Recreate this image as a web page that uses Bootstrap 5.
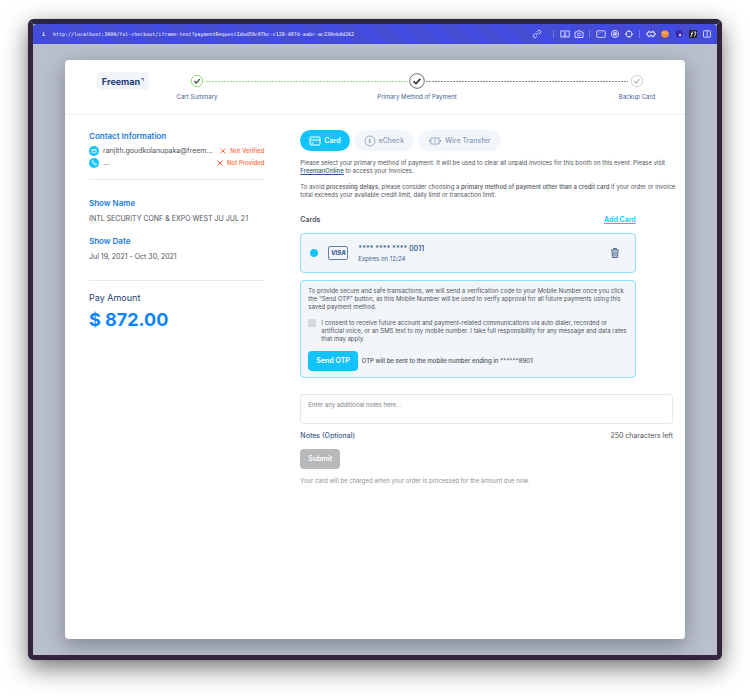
<!DOCTYPE html>
<html lang="en">
<head>
<meta charset="utf-8">
<meta name="viewport" content="width=device-width, initial-scale=1">
<title>Freeman Checkout</title>
<link href="https://cdn.jsdelivr.net/npm/bootstrap@5.3.0/dist/css/bootstrap.min.css" rel="stylesheet">
<style>
:root{--cyan:#12c4fb;--navy:#3f5f8f;--pale:#f2f6fb;--blue:#1b7ce0}
body{font-family:Inter,"Liberation Sans",sans-serif;font-size:6px;line-height:8px;color:#50545a;background:#fff}
button,input,textarea{font-family:inherit}
.page-pad{padding:19px 28px 37px}
.browser{border:5px solid #34253f;border-top-color:#292640;border-radius:6px;background:#bac0cb;box-shadow:0 0 1px #667,0 8px 24px rgba(0,0,0,.55)}
.toolbar{height:20px;padding:0 5px 0 9px;color:#fff;background:repeating-linear-gradient(45deg,#414bdf 0 12px,#454cd2 12px 24px);font:400 5px/10px "DejaVu Sans Mono",monospace}
.toolbar svg{width:10px;height:10px;flex:none;fill:none;stroke:#cfd1ff;stroke-width:1}
.dots{width:4px;height:8px;background:linear-gradient(90deg,transparent 1px,#7379ea 1px 2px,transparent 2px)}
.tool-gap{margin-right:6px}
.stage{padding:16px 32px}
.sheet{border-radius:4px;background:#fff;box-shadow:0 6px 20px rgba(40,45,60,.4)}
.sheet-head{padding:12px 8px 0 32px;height:55px;border-bottom:1px solid #eceef1}
.brand-box{width:52px;height:18px;border-radius:4px;background:var(--pale);color:#1c3a70;font-size:9px;line-height:19px;font-weight:700;margin-right:8px}
.brand-box svg{width:4px;height:4px;margin-bottom:5px}
.step{width:80px;flex:none;color:var(--navy)}
.step svg{width:18px;height:18px;display:block;margin:0 auto 3px;fill:none}
.joint{height:1px;margin:9px -31px 0;background:repeating-linear-gradient(90deg,#85878b 0 2px,transparent 2px 3px)}
.joint.done{background:repeating-linear-gradient(90deg,#9bd882 0 2px,transparent 2px 3px)}
.sheet-body{display:grid;grid-template-columns:32fr 68fr;gap:36px;padding:15px 12px 154px 24px}
.title{font-size:8px;line-height:12px;font-weight:600;color:var(--blue);margin:0}
.value{font-size:7px;line-height:12px}
.rule{height:1px;background:#e9eaec}
.dot-icon{width:10px;height:10px;flex:none}
.alert-text{color:#ff6a39;font-size:6px;font-weight:500}
.alert-text svg{width:6px;height:6px;stroke:#ff6a39}
.amount{font-size:18px;line-height:22px;font-weight:700;color:#0b84ff}
.pay{font-size:9px;line-height:14px;color:#1f3c70}
.pill{height:21px;border:0;border-radius:11px;padding:0 10px;gap:3px;background:var(--pale);color:#8b9db8;font-size:7px;line-height:12px;font-weight:500}
.pill.on{background:var(--cyan);color:#fff;font-weight:600;padding:0 9px}
.pill svg{height:12px;fill:none;stroke:currentColor;stroke-width:1}
.copy{margin-right:-4px}
.copy strong{font-weight:500}
.narrow{width:90%}
.box{border:1px solid #8fdefb;border-radius:4px;background:var(--pale)}
.pick{appearance:none;width:8px;height:8px;border-radius:4px;background:var(--cyan);margin:0}
.visa{width:20px;height:14px;border:1px solid #6680a8;border-radius:2px;color:var(--navy);font-size:6px;line-height:12px;font-weight:800;font-style:italic}
.tick{appearance:none;width:8px;height:8px;flex:none;background:#d7dade;border-radius:1px;margin:0}
.act{border:0;border-radius:4px;height:20px;padding:0 8px;color:#fff;background:var(--cyan);font-size:7px;line-height:12px;font-weight:600}
.act:disabled{background:#b6b8ba}
.notes{height:30px;border:1px solid #e5e7eb;border-radius:3px;padding:6px 7px;font-size:6px;line-height:8px;resize:none;display:block}
.notes::placeholder{color:#7d8188}
.s7{font-size:7px;line-height:12px}
.foot{color:#8d9197}
.g3{margin-top:3px}
.g6{margin-top:6px}
.g7{margin-top:7px}
.g10{margin-top:10px}
.g15{margin-top:15px}
.g17{margin-top:17px}
.online{color:#2c5590;font-weight:500}
.add{color:var(--cyan)}
.saved{height:40px;padding:0 15px 0 9px}
.saved-label{color:var(--navy);gap:10px;margin-left:10px}
.bin{border:0;background:none;padding:0;width:10px;height:12px;display:flex}
.bin svg{width:10px;height:12px;fill:none}
.consent{padding:6px 7px}
.agree{margin-left:5px;margin-right:-2px}
.notes-label{color:var(--navy);font-weight:500}
.otp-note{font-weight:500}
</style>
</head>
<body>
<div class="page-pad">
<div class="browser">
  <div class="toolbar d-flex align-items-center gap-1 rounded-top-1">
    <b class="me-1">i</b>
    <span class="me-auto text-nowrap">http://localhost:3000/fol-checkout/iframe-test?paymentRequestId=d59c07bc-c128-497d-aabc-ac230eb4d262</span>
    <svg class="tool-gap" viewBox="0 0 10 10"><path d="M4 6 6.500 3.500M4.500 3.200 6 1.700a1.600 1.600 0 0 1 2.300 2.300L6.500 5.800M5.500 6.800 4 8.300A1.600 1.600 0 0 1 1.700 6L3.500 4.200"/></svg>
    <span class="dots"></span>
    <svg viewBox="0 0 10 10"><rect x=".8" y="2" width="8.400" height="6"/><circle cx="5" cy="4.300" r=".8"/><path d="M3.500 7c.7-1.200 2.300-1.200 3 0z"/></svg>
    <svg viewBox="0 0 10 10"><path d="M1 3h2l.7-1.200h2.600L7 3h2v5.500H1z"/><circle cx="5" cy="5.500" r="1.500"/></svg>
    <span class="dots"></span>
    <svg viewBox="0 0 10 10"><rect x=".8" y="1.800" width="8.400" height="6.600" rx=".6"/><path d="m2.500 3.500 1 1M4.500 3.500h1" stroke-width=".7"/></svg>
    <svg viewBox="0 0 10 10"><circle cx="5" cy="5" r="3.600"/><circle cx="5" cy="5" r="1.300"/><path d="M5 1.400v7.200M1.400 5h7.200M2.500 2.500l5 5M7.500 2.500l-5 5" stroke-width=".5"/></svg>
    <svg viewBox="0 0 10 10"><circle cx="5" cy="5" r="3"/><path d="M5 .8v2.400M5 6.800v2.400M.8 5h2.400M6.800 5h2.400"/></svg>
    <span class="dots"></span>
    <svg viewBox="0 0 10 10"><path d="M3 2.300.6 5 3 7.700l2-1.500 2 1.500L9.400 5 7 2.300 5 3.800z" stroke-width="1.200"/></svg>
    <svg viewBox="0 0 10 10"><circle cx="5" cy="5" r="3.800" fill="#ed9140" stroke="none"/><path d="M2 3.500Q5 6 8 3" stroke="#ffc27c"/></svg>
    <svg viewBox="0 0 10 10"><circle cx="5" cy="4.700" r="3.500" fill="#3b26a6" stroke="none"/><circle cx="6" cy="6" r="1.200" fill="#d7cfff" stroke="none"/></svg>
    <svg viewBox="0 0 10 10"><rect x="1" y="1" width="8" height="8" rx="1" fill="#24262b" stroke="none"/><path d="M2.500 8c1 0 1-5.500 2.500-5.500M3 4.500h2M6 3h2L6.500 7.500" stroke="#fff" stroke-width=".8"/></svg>
    <svg viewBox="0 0 10 10"><rect x="1.500" y="1.800" width="7" height="6.400" rx=".6"/><path d="M5.200 2v6"/></svg>
  </div>
  <div class="stage">
  <main class="sheet">
    <header class="sheet-head d-flex align-items-start">
      <div class="brand-box text-center flex-shrink-0">Freeman<svg viewBox="0 0 4 4"><path d="M.3.300h3.200v3.200l-1-2.200z" fill="#1c3a70"/></svg></div>
      <div class="step text-center"><svg viewBox="0 0 18 18"><circle cx="9" cy="9" r="5.700" stroke="#8fd877"/><path d="m6.300 9.200 2 1.900 3.400-4" stroke="#44484f" stroke-width="1.400"/></svg>Cart Summary</div>
      <div class="joint done flex-grow-1"></div>
      <div class="step text-center"><svg viewBox="0 0 18 18"><circle cx="9" cy="9" r="7.300" stroke="#666a72"/><path d="m5.400 9.400 2.600 2.200 4.300-4.800" stroke="#333840" stroke-width="1.800"/></svg>Primary Method of Payment</div>
      <div class="joint flex-grow-1"></div>
      <div class="step text-center"><svg viewBox="0 0 18 18"><circle cx="9" cy="9" r="5.700" stroke="#cfd2d6"/><path d="m6.300 9.200 2 1.900 3.400-4" stroke="#b5b9c0" stroke-width="1.200"/></svg>Backup Card</div>
    </header>
    <div class="sheet-body">
      <aside>
        <h2 class="title">Contact Information</h2>
        <div class="d-flex align-items-center s7 g3">
          <svg class="dot-icon me-1" viewBox="0 0 10 10"><circle cx="5" cy="5" r="5" fill="#12c4fb"/><path d="M2.800 3.500h4.400v3.200H2.800zl2.200 1.700 2.200-1.700" fill="none" stroke="#fff" stroke-width=".7"/></svg>
          <span class="text-nowrap">ranjith.goudkolanupaka@freem...</span>
          <span class="alert-text ms-auto text-nowrap d-flex align-items-center gap-1"><svg viewBox="0 0 6 6"><path d="m.7.700 4.600 4.600M5.300.7.700 5.300"/></svg>Not Verified</span>
        </div>
        <div class="d-flex align-items-center s7">
          <svg class="dot-icon me-1" viewBox="0 0 10 10"><circle cx="5" cy="5" r="5" fill="#12c4fb"/><path d="M3.300 2.800c-1 1.500 2 4.700 3.900 4.100l.2-1-1.300-.6-.6.500-1-1.100.4-.6-.7-1.400z" fill="none" stroke="#fff" stroke-width=".7"/></svg>
          <span>...</span>
          <span class="alert-text ms-auto text-nowrap d-flex align-items-center gap-1"><svg viewBox="0 0 6 6"><path d="m.7.700 4.600 4.600M5.300.7.700 5.300"/></svg>Not Provided</span>
        </div>
        <div class="rule g10"></div>
        <h2 class="title g17">Show Name</h2>
        <div class="value mt-1">INTL SECURITY CONF &amp; EXPO WEST JU JUL 21</div>
        <h2 class="title g10">Show Date</h2>
        <div class="value mt-1">Jul 19, 2021 - Oct 30, 2021</div>
        <div class="rule g17"></div>
        <div class="pay g10">Pay Amount</div>
        <div class="amount mt-1">$ 872.00</div>
      </aside>
      <section>
        <div class="d-flex gap-1">
          <button type="button" class="pill on d-flex align-items-center"><svg viewBox="0 0 12 12" width="12"><rect x="1" y="2" width="10" height="8" rx="1"/><path d="M1 5h10M2.500 8h2"/></svg>Card</button>
          <button type="button" class="pill d-flex align-items-center"><svg viewBox="0 0 12 12" width="12"><circle cx="6" cy="6" r="5" stroke-width=".8"/><path d="M7 4.500H5.200v3H7M5.200 6h1.600" stroke-width=".8"/></svg>eCheck</button>
          <button type="button" class="pill d-flex align-items-center"><svg viewBox="0 0 14 12" width="14"><path d="M3 4.500V3h8v1.500M3 7.500V9h8V7.500M4 6H1m1.500-1.500L1 6l1.500 1.500M10 6h3m-1.500-1.500L13 6l-1.500 1.500M7 4.500v3" stroke-width=".9"/></svg>Wire Transfer</button>
        </div>
        <div class="copy mt-2">Please select your primary method of payment. It will be used to clear all unpaid invoices for this booth on this event. Please visit <a href="#" class="online">FreemanOnline</a> to access your invoices.</div>
        <div class="copy mt-2">To avoid <strong>processing delays</strong>, please consider choosing a <strong>primary method of payment other than a credit card</strong> if your order or invoice total exceeds your available credit limit, daily limit or transaction limit.</div>
        <div class="narrow">
          <div class="d-flex justify-content-between s7 g15 fw-semibold"><span>Cards</span><a href="#" class="add">Add Card</a></div>
          <div class="box g7 d-flex align-items-center saved">
            <input class="pick" type="radio" name="card" id="visa0011" checked>
            <label for="visa0011" class="d-flex align-items-center flex-grow-1 saved-label">
              <span class="visa text-center">VISA</span>
              <span><span class="d-block s7 fw-semibold">**** **** **** 0011</span><span class="d-block">Expires on 12/24</span></span>
            </label>
            <button type="button" class="bin" aria-label="Delete card"><svg viewBox="0 0 10 12"><path d="M1 3h8M3.500 3V1.500h3V3M2 3.500l.4 7h5.200l.4-7" fill="#b9c7db" stroke="#526c94"/><path d="M4 5v4M6 5v4" stroke="#526c94" stroke-width=".7"/></svg></button>
          </div>
          <div class="box g7 consent">
            <div>To provide secure and safe transactions, we will send a verification code to your Mobile Number once you click the “Send OTP” button, as this Mobile Number will be used to verify approval for all future payments using this saved payment method.</div>
            <div class="d-flex mt-2">
              <input class="tick" type="checkbox" id="agree">
              <label for="agree" class="agree">I consent to receive future account and payment-related communications via auto dialer, recorded or artificial voice, or an SMS text to my mobile number. I take full responsibility for any message and data rates that may apply.</label>
            </div>
            <div class="d-flex align-items-center mt-2 gap-1"><button type="button" class="act">Send OTP</button><span class="otp-note">OTP will be sent to the mobile number ending in ******8901</span></div>
          </div>
        </div>
        <textarea id="notes" class="notes w-100 mt-3" maxlength="250" placeholder="Enter any additional notes here..."></textarea>
        <div class="d-flex justify-content-between s7 g6"><label for="notes" class="notes-label">Notes (Optional)</label><span>250 characters left</span></div>
        <button type="submit" class="act g7" disabled>Submit</button>
        <div class="foot mt-2">Your card will be charged when your order is processed for the amount due now.</div>
      </section>
    </div>
  </main>
  </div>
</div>
</div>
<script src="https://cdn.jsdelivr.net/npm/bootstrap@5.3.0/dist/js/bootstrap.bundle.min.js"></script>
</body>
</html>
